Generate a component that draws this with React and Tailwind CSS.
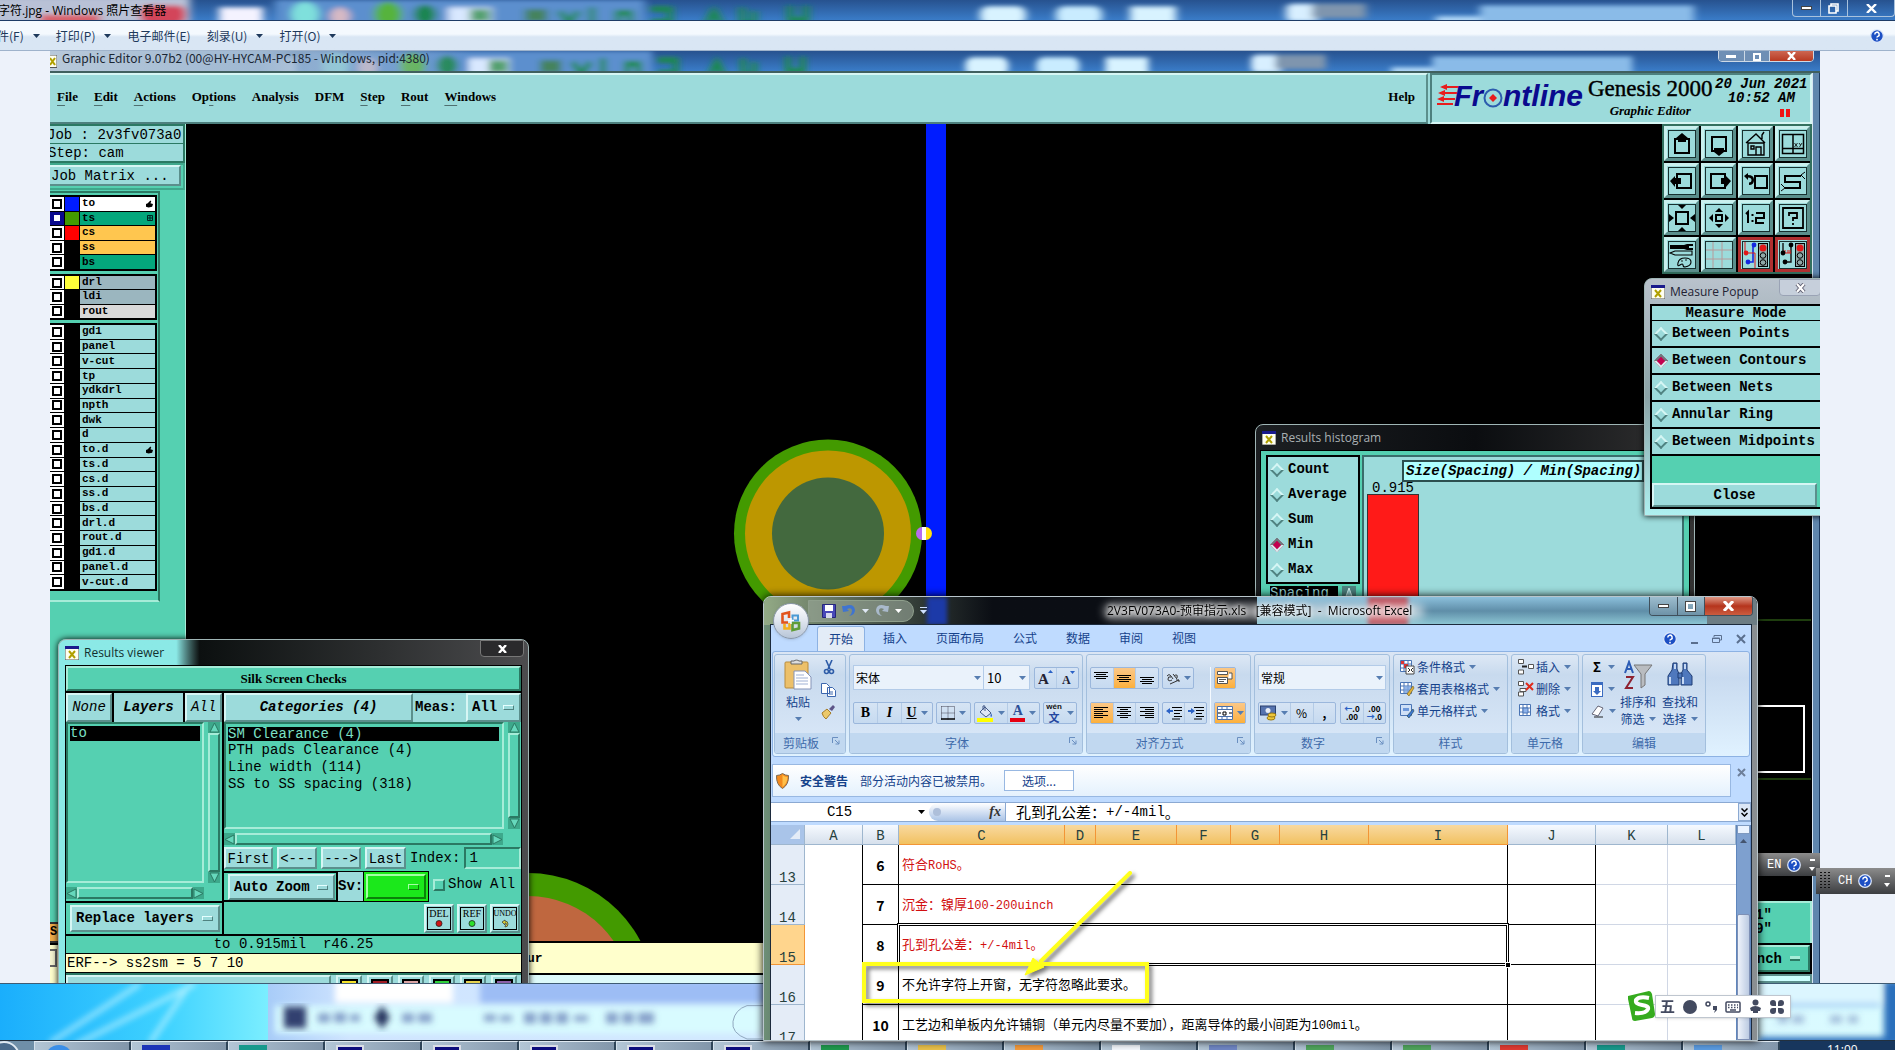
import { useState } from 'react';
import clsx from 'clsx';

const MONO = "font-['Liberation_Mono','Noto_Sans_CJK_SC',monospace]";
const SERIF = "font-['Liberation_Serif',serif]";
const UI = "font-['Open_Sans','Noto_Sans_CJK_SC',sans-serif]";
const CJK = "font-['Noto_Sans_CJK_SC',sans-serif]";

// Motif style bevels
const raised = 'border-2 border-t-[#d6f6f4] border-l-[#d6f6f4] border-b-[#5b8f8c] border-r-[#5b8f8c] bg-[#9cdbdb]';
const raisedGreen = 'border-2 border-t-[#a6ecd8] border-l-[#a6ecd8] border-b-[#2b7963] border-r-[#2b7963] bg-[#55d0b1]';
const sunkenGreen = 'border-2 border-t-[#2b7963] border-l-[#2b7963] border-b-[#a6ecd8] border-r-[#a6ecd8] bg-[#55d0b1]';

const layerGroups = [
  {
    height: 'h-[76px]',
    rows: [
      { name: 'to', color: 'bg-[#001cff]', bg: 'bg-white', mark: 'hand' },
      { name: 'ts', color: 'bg-[#439a00]', bg: 'bg-[#04a77c]', mark: 'grid', on: true },
      { name: 'cs', color: 'bg-[#ff0000]', bg: 'bg-[#ffc64f]' },
      { name: 'ss', color: 'bg-black', bg: 'bg-[#ffc64f]' },
      { name: 'bs', color: 'bg-black', bg: 'bg-[#04a77c]' },
    ],
  },
  {
    height: 'h-[46px]',
    rows: [
      { name: 'drl', color: 'bg-[#ffff3a]', bg: 'bg-[#9bb6bf]' },
      { name: 'ldi', color: 'bg-black', bg: 'bg-[#9bb6bf]' },
      { name: 'rout', color: 'bg-black', bg: 'bg-[#d9d9d9]' },
    ],
  },
  {
    height: 'h-[268px]',
    rows: ['gd1', 'panel', 'v-cut', 'tp', 'ydkdrl', 'npth', 'dwk', 'd', 'to.d', 'ts.d', 'cs.d', 'ss.d', 'bs.d', 'drl.d', 'rout.d', 'gd1.d', 'panel.d', 'v-cut.d'].map((name) => ({
      name,
      color: 'bg-black',
      bg: 'bg-[#9cdbdb]',
      mark: name === 'to.d' ? 'hand' : undefined,
    })),
  },
];

const Caret = ({ className = 'text-[#567db1]' }) => (
  <svg width="7" height="4" viewBox="0 0 7 4" className={clsx('shrink-0', className)}>
    <path d="M0 0h7L3.5 4z" fill="currentColor" />
  </svg>
);

const XIcon = () => (
  <svg width="14" height="14" viewBox="0 0 14 14" className="shrink-0">
    <rect width="14" height="14" fill="#fffff0" stroke="#555" />
    <rect width="14" height="3" fill="#1a1a8c" />
    <path d="M4 5l6 7M10 5l-6 7" stroke="#b0a000" strokeWidth="2" />
  </svg>
);

const HelpBall = ({ size = 14 }) => (
  <svg width={size} height={size} viewBox="0 0 14 14" className="shrink-0">
    <circle cx="7" cy="7" r="6.3" fill="#1c4fc4" stroke="#dfe9fa" strokeWidth="1.2" />
    <path d="M4.8 5.4a2.2 2.2 0 1 1 3.2 1.9q-1 .5-1 1.3" fill="none" stroke="#fff" strokeWidth="1.5" />
    <rect x="6.2" y="9.8" width="1.6" height="1.6" fill="#fff" />
  </svg>
);

// Icons behind the glass of the title bars
const GlassBackdrop = ({ className }) => (
  <svg className={clsx('absolute inset-0 h-full w-full', className)} viewBox="0 0 1895 22" preserveAspectRatio="none">
    <defs>
      <linearGradient id="glassFade" x1="0" x2="0" y1="0" y2="1">
        <stop offset="0" stopColor="#27528f" />
        <stop offset="1" stopColor="#3a7cc8" />
      </linearGradient>
      <filter id="glassBlur" x="-5%" y="-50%" width="110%" height="200%"><feGaussianBlur stdDeviation="4 2.5" /></filter>
    </defs>
    <rect width="1895" height="22" fill="url(#glassFade)" />
    <g filter="url(#glassBlur)">
      <rect x="-10" y="-4" width="200" height="30" fill="#b9c1d6" />
      <rect x="40" y="16" width="60" height="10" fill="#d9606a" />
      <rect x="140" y="6" width="46" height="20" rx="8" fill="#d3455a" />
      <rect x="219" y="8" width="44" height="20" fill="#f4f3ff" />
      <rect x="275" y="0" width="370" height="30" fill="#5b8fce" />
      <circle cx="305" cy="16" r="14" fill="#7fe0dc" />
      <circle cx="340" cy="18" r="10" fill="#d7b9c4" />
      <circle cx="388" cy="16" r="14" fill="#57b33c" />
      <circle cx="425" cy="16" r="11" fill="#1f8551" />
      <rect x="448" y="8" width="44" height="20" fill="#d9e8ff" />
      <rect x="470" y="10" width="20" height="14" fill="#55a070" />
      <rect x="525" y="10" width="22" height="14" fill="#44835d" />
      <path d="M560 12l9 14 9-14M592 8v20M618 26V14h12v12M650 10h20v14h-20M706 28l8-16 8 16M742 8v18h12V12M790 6v16h16V6" fill="none" stroke="#1c8a4a" strokeWidth="6" />
      <rect x="980" y="7" width="46" height="20" rx="8" fill="#d8f3ff" />
      <rect x="1056" y="7" width="46" height="20" rx="8" fill="#c9ecff" />
      <rect x="1130" y="7" width="46" height="20" fill="#d8f3ff" />
      <rect x="1286" y="4" width="34" height="20" rx="6" fill="#d8efff" />
      <rect x="1312" y="4" width="54" height="16" fill="#7f95ae" />
      <rect x="1436" y="18" width="60" height="8" fill="#b5daf8" />
      <rect x="1480" y="6" width="214" height="22" fill="#8abbe8" />
    </g>
  </svg>
);

const ViewerMenu = () => (
  <nav className={clsx('flex h-[30px] shrink-0 items-center border-b border-[#9fb3cb] bg-linear-to-b from-[#f4f9fe] from-45% to-[#d9e6f4] to-55% pr-[11px] text-xs text-[#1e395b]', CJK)}>
    <div className="-ml-[3px] flex flex-1 items-center gap-[16px]">
      {[['件(F)', true], ['打印(P)', true], ['电子邮件(E)', false], ['刻录(U)', true], ['打开(O)', true]].map(([label, arrow]) => (
        <button key={label} className="flex items-center gap-[9px] whitespace-nowrap">
          {label}
          {arrow && <Caret className="text-[#1e395b]" />}
        </button>
      ))}
    </div>
    <HelpBall />
  </nav>
);

const GenesisMenuBar = () => (
  <div className="flex h-[51px] shrink-0 bg-[#9cdbdb]">
    <div className={clsx('flex flex-1 items-center gap-[16px] border-2 border-l-0 border-t-[#d6f6f4] border-r-[#5b8f8c] border-b-[#4d807e] pl-[7px] pr-[11px] pb-[3px] text-[13px] font-bold text-black', SERIF)}>
      {['_File', '_Edit', '_Actions', 'Op_tions', 'Analysis', 'DFM', '_Step', '_Rout', '_Windows'].map((item) => {
        const [before, after] = item.includes('_') ? item.split('_') : [item, ''];
        return (
          <button key={item}>
            {before}
            {after && <span className="underline decoration-[#4f6f70] underline-offset-4">{after[0]}</span>}
            {after.slice(1)}
          </button>
        );
      })}
      <button className="ml-auto">Help</button>
    </div>
    <div className="ml-[2px] flex w-[382px] border-2 border-t-[#4d807e] border-l-[#4d807e] border-r-[#d6f6f4] border-b-[#d6f6f4] pl-1">
      <svg width="152" height="46" viewBox="0 0 152 46" className="shrink-0">
        <g stroke="#e81c1c" strokeWidth="2.2">
          <path d="M6 12h17M4 18h17M3 24h16M1 29h16" />
        </g>
        <path d="M4 12l7-3v6zM2 18l7-3v6zM1 24l7-3v6z" fill="#e81c1c" />
        <text x="18" y="31" fontSize="29" fontWeight="bold" fontStyle="italic" fill="#0a0a8e" fontFamily="Liberation Sans">Fr</text>
        <circle cx="57" cy="23" r="8.5" fill="none" stroke="#2c5cae" strokeWidth="2" />
        <path d="M57 19l4 4-4 4-4-4z" fill="#e81c1c" />
        <text x="67" y="31" fontSize="30" fontWeight="bold" fontStyle="italic" fill="#0a0a8e" fontFamily="Liberation Sans">ntline</text>
      </svg>
      <div className={clsx('flex flex-col items-center text-black', SERIF)}>
        <span className="mt-1 whitespace-nowrap text-[23px] leading-5 [-webkit-text-stroke:0.4px_black]">Genesis 2000</span>
        <span className="mt-[6px] text-[13px] font-bold italic leading-3">Graphic Editor</span>
      </div>
      <div className={clsx('flex flex-1 flex-col items-center whitespace-nowrap text-[14px] font-bold italic leading-[14px] text-black', MONO)}>
        <span className="mt-[2px]">20 Jun 2021</span>
        <span>10:52 AM</span>
        <span className="mt-[4px] mr-2 flex gap-[2px] self-end pr-3">
          <i className="h-[8px] w-[4px] bg-[#f01414]" />
          <i className="h-[8px] w-[4px] bg-[#f01414]" />
        </span>
      </div>
    </div>
  </div>
);

const LayerRow = ({ row }) => {
  const [checked, setChecked] = useState(Boolean(row.on));
  return (
    <label className="flex min-h-0 bg-black pt-px">
      <span className={clsx('flex w-[14px] items-center justify-center', row.on ? 'bg-[#0a0a8e]' : 'bg-white')}>
        <input
          type="checkbox"
          aria-label={row.name}
          checked={checked}
          onChange={() => setChecked(!checked)}
          className={clsx('size-[10px] appearance-none border-2 bg-white', row.on ? 'border-[#0a0a8e]' : 'border-black')}
        />
      </span>
      <span className={clsx('mx-px w-[14px]', row.color)} />
      <span className={clsx('flex min-h-0 flex-1 items-center justify-between overflow-hidden px-[2px] text-[11px] font-bold leading-[13px]', row.bg)}>
        {row.name}
        {row.mark === 'hand' && (
          <svg width="7" height="8" viewBox="0 0 8 8"><path d="M0 4l2-1 3-3 1 1-1 2 3 1-1 3-4 1-3-1z" /></svg>
        )}
        {row.mark === 'grid' && (
          <svg width="6" height="6" viewBox="0 0 6 6" fill="none" stroke="#022"><path d="M.5 .5h5v5h-5zM0 3h6M3 0v6" /></svg>
        )}
      </span>
    </label>
  );
};

const LayerPanel = () => (
  <aside className={clsx('flex w-[136px] shrink-0 flex-col border-r border-[#a6ecd8] bg-[#55d0b1] text-black', MONO)}>
    <div className="border-2 border-l-0 border-[#2b7963] bg-[#2b7963] text-[14px] leading-[18px]">
      <div className="h-[17px] overflow-hidden whitespace-nowrap bg-[#9cdbdb]"><span className="-ml-[3px]">Job : 2v3fv073a0</span></div>
      <div className="mt-px h-[17px] overflow-hidden whitespace-nowrap bg-[#9cdbdb]"><span className="-ml-[2px]">Step: cam</span></div>
    </div>
    <div className="border-2 border-l-0 border-[#3fa88c] pr-[2px] pb-[2px]">
      <button className={clsx('block h-[21px] w-full whitespace-nowrap border-l-0 pl-px text-left text-[14px] leading-[18px]', raised)}>Job Matrix ...</button>
    </div>
    <div className="mt-px mr-[25px] flex flex-col gap-[3px] border-2 border-l-0 border-t-[#2b7963] border-r-[#2b7963] border-b-[#a6ecd8] pt-[2px] pr-px pb-[9px]">
      {layerGroups.map((group) => (
        <div key={group.height} className={clsx('grid auto-rows-fr border-2 border-l-0 border-t border-black bg-black', group.height)}>
          {group.rows.map((row) => <LayerRow key={row.name} row={row} />)}
        </div>
      ))}
    </div>
    <div className="mt-auto h-[21px] w-4 overflow-hidden border-y-2 border-[#333] bg-[#f0ad4a] text-xs font-bold leading-4">Se</div>
    <div className="h-[40px] w-4 border-t-2 border-black bg-[#ffffcc] pt-1">
      <div className="h-[18px] w-[7px] border-2 border-l-0 border-[#666] bg-[#f4f4d0]" />
    </div>
  </aside>
);

const sq = (x, y, w) => <rect x={x} y={y} width={w} height={w} fill="none" stroke="#000" strokeWidth="2" />;

const trafficLight = (
  <>
    <rect x="16.5" y="2.5" width="9" height="23" fill="#8fa9a8" stroke="#000" />
    <circle cx="21" cy="7" r="3.5" fill="#e01818" />
    <circle cx="21" cy="14.5" r="2.8" fill="none" stroke="#000" />
    <circle cx="21" cy="21.5" r="2.8" fill="none" stroke="#000" />
  </>
);

const toolIcons = [
  { name: 'Pan up', art: <>{sq(7, 9, 14)}<path d="M14 3l6 5h-2v4h-8V8H8z" /></> },
  { name: 'Pan down', art: <>{sq(7, 7, 14)}<path d="M14 26l-5-4v-4h10v4z" /></> },
  { name: 'Home', art: <path d="M4 13l10-9 9 9M6 13v12h16V13zM9 16h3v3H9zM14 25v-8h5v8M20 9V5l2-3" fill="none" stroke="#000" strokeWidth="1.4" /> },
  { name: 'Zoom window', art: <><path d="M3.500 4.500h21v19h-21zM14 4v20M4 18.500h20" fill="none" stroke="#000" strokeWidth="1.5" /><path d="M15.500 13l3 4M18.500 13l-3 4M20 13l1.500 2M23 13l-2.500 4" fill="none" stroke="#000" strokeWidth=".8" /></> },
  { name: 'Pan left', art: <>{sq(9, 7, 14)}<path d="M2 14l5-5v2h6v6H7v3z" /></> },
  { name: 'Pan right', art: <>{sq(6, 7, 14)}<path d="M26 14l-5-5v2h-5v6h5v3z" /></> },
  { name: 'Previous view', art: <>{sq(13, 9, 12)}<path d="M2 9l4-3v2q6 0 6 5t-5 5v-2.500q2.500 0 2.500-2.500T6 10.500V13z" /></> },
  { name: 'Serpentine', art: <><path d="M22 9H6v6h15v6H6" fill="none" stroke="#000" strokeWidth="2" /><path d="M26 5l-4 3 4 4M2 17l4 4-4 3" fill="none" stroke="#000" /></> },
  { name: 'Zoom in', art: <>{sq(8, 8, 12)}<path d="M10 1h8l-4 4zM10 27h8l-4-4zM1 10v8l5-4zM27 10v8l-5-4z" /></> },
  { name: 'Zoom out', art: <>{sq(11, 11, 6)}<path d="M10 8h8l-4-4zM10 20h8l-4 4zM8 10v8l-4-4zM20 10v8l4-4z" /></> },
  { name: 'Scale', art: <path d="M4 10l2-2v11M10.500 10v2M10.500 16v2M14 9h8v5h-8v5h8" fill="none" stroke="#000" strokeWidth="2" /> },
  { name: 'Query', art: <path d="M4 4h20v20H4zM10 12V9h8v5h-4v3M14 19v2" fill="none" stroke="#000" strokeWidth="1.8" /> },
  { name: 'Tools', art: <><path d="M2 4h14l3-1h6v2h-4v2h4v2h-6l-3-1H2z" /><path d="M2 12l5-2h17v4H7z" fill="none" stroke="#000" strokeWidth="1.1" /><path d="M10 22q1-5 7-5t6 4-6 5q-2 0-2-2t-3 0-2-2z" fill="none" stroke="#000" strokeWidth="1.1" /><circle cx="14" cy="20" r=".8" /><circle cx="18" cy="19" r=".8" /></> },
  { name: 'Grid', art: <path d="M8 1v26M17 1v26M1 9h26M1 18h26" stroke="#b79a9a" /> },
  { name: 'Net colors', red: true, art: <><path d="M11 4v17H6" fill="none" stroke="#1428e0" strokeWidth="1.6" /><path d="M4 12h9M3 1v11M13 12v15" fill="none" stroke="#e01818" /><circle cx="12" cy="4" r="2.4" fill="#1428e0" /><circle cx="6" cy="21" r="2.4" fill="#1428e0" /><circle cx="4" cy="12" r="2.4" fill="#e01818" />{trafficLight}</> },
  { name: 'Net select', red: true, art: <><path d="M12 4v17H6M4 12V2" fill="none" stroke="#111" strokeWidth="1.4" /><path d="M5 12h7M6 9v3M9 9v3M11 9v3" stroke="#e01818" /><circle cx="12" cy="4" r="2.4" /><circle cx="6" cy="21" r="2.4" /><circle cx="4" cy="12" r="2.4" />{trafficLight}</> },
];

const RightPanel = () => (
  <aside className={clsx('flex w-[150px] shrink-0 flex-col bg-black font-bold text-black', MONO)}>
    <div className="grid grid-cols-4 gap-[2px] border-2 border-[#33705f] bg-black">
      {toolIcons.map((icon) => (
        <button
          key={icon.name}
          aria-label={icon.name}
          className={clsx('flex h-[35px] items-center justify-center border-[3px]', icon.red ? 'border-[#b03030] bg-[#9cdbdb]' : 'border-t-[#c9f0ee] border-l-[#c9f0ee] border-b-[#5b8f8c] border-r-[#5b8f8c] bg-[#9cdbdb]')}
        >
          <svg width="28" height="28" viewBox="0 0 28 28">
            <rect x=".5" y=".5" width="27" height="27" fill="none" stroke="#17302f" />
            {icon.art}
          </svg>
        </button>
      ))}
    </div>
    <svg className="min-h-0 w-full flex-1" fill="none">
      <path d="M0 346h149M0 505h149" stroke="#3c7a1c" strokeWidth="1" />
      <path d="M0 432h142v66H0" stroke="#fff" strokeWidth="2" />
    </svg>
    <div className="h-[42px] border-t-2 border-r-2 border-[#a6ecd8] bg-[#55d0b1] pt-[5px] pr-[38px] text-right text-sm leading-[14px]">1&quot;<br />9&quot;</div>
    <div className="h-[31px] border-2 border-black">
      <button className={clsx('flex h-full w-full items-center justify-end gap-2 pr-2 text-sm', raisedGreen)}>
        nch <i className="h-[5px] w-[10px] border-b-2 border-[#2b7963] bg-[#a6ecd8]" />
      </button>
    </div>
    <div className="h-[9px] border-2 border-[#5b8f8c] bg-[#cff]" />
  </aside>
);

const BoardCanvas = () => (
  <div className="flex min-w-0 flex-1 flex-col overflow-hidden bg-black">
    <svg className="min-h-0 w-full flex-1">
      <rect x="740" y="0" width="20" height="818" fill="#001cff" />
      <circle cx="642" cy="409.5" r="94" fill="#439a00" />
      <circle cx="642" cy="409.5" r="83" fill="#bd9700" />
      <circle cx="642" cy="409.5" r="56" fill="#43693e" />
      <path d="M736 403a6 6.5 0 0 0 0 13z" fill="#b76cf0" />
      <path d="M740 403a6 6.5 0 0 1 0 13z" fill="#ffe010" />
      <rect x="736" y="403" width="4" height="13" fill="#fff" />
      <circle cx="342" cy="876" r="127" fill="#439a00" />
      <circle cx="342" cy="876" r="104" fill="#bf673f" />
    </svg>
    <div className={clsx('mt-[2px] h-[30px] shrink-0 bg-[#ffffcc] pl-[341px] text-[13px] font-bold leading-[32px]', MONO)}>ur</div>
    <div className="h-[10px] shrink-0 border-t-2 border-black bg-[#ddfafa]" />
  </div>
);

const CanvasWindow = ({ title, className, titleClass, glass, children }) => (
  <section className={clsx('absolute flex flex-col overflow-hidden rounded-t-lg border border-[#9fb5b5] px-[6px] shadow-[0_0_6px_#000]', glass, className)}>
    <header className={clsx('flex h-[25px] shrink-0 items-center gap-[5px] text-xs', UI, titleClass)}>
      <XIcon />
      {title}
    </header>
    {children}
  </section>
);

const RadioRow = ({ group, label, checked, onChange, className }) => (
  <label className={clsx('flex items-center gap-[6px] whitespace-nowrap text-[14px] font-bold', className)}>
    <input
      type="radio"
      name={group}
      checked={checked}
      onChange={onChange}
      className={clsx(
        'size-[10px] shrink-0 rotate-45 appearance-none border-2',
        checked ? 'border-t-[#6b7c7c] border-l-[#6b7c7c] border-r-[#d8eeee] border-b-[#d8eeee] bg-[#c3004f]' : 'border-t-[#d6f6f4] border-l-[#d6f6f4] border-r-[#4f8280] border-b-[#4f8280] bg-[#9cdbdb]'
      )}
    />
    {label}
  </label>
);

const HistogramWindow = () => {
  const [mode, setMode] = useState('Min');
  return (
    <CanvasWindow title="Results histogram" className="top-[373px] left-[1205px] h-[180px] w-[440px]" glass="bg-linear-to-r from-[#1c1f22] via-[#0b0d10] to-[#333]" titleClass="text-[#a9b0b3]">
      <div className={clsx('-mx-[2px] flex min-h-0 flex-1 gap-[2px] border border-black bg-[#55d0b1] p-[5px] pt-1 pb-0 text-black', MONO)}>
        <div className="w-[94px] shrink-0">
          <div className="border-2 border-black bg-[#9cdbdb] pl-[4px]">
            {['Count', 'Average', 'Sum', 'Min', 'Max'].map((m) => (
              <RadioRow key={m} group="stat" label={m} checked={mode === m} onChange={() => setMode(m)} className="h-[25px]" />
            ))}
          </div>
          <div className="mt-[2px] flex">
            <div className="ml-1 w-[68px] bg-black text-[14px] leading-[14px] text-[#9cdbdb]">Spacing</div>
            <svg width="14" height="16" viewBox="0 0 14 16" className="ml-1 bg-[#4d807e]"><path d="M7 2l4 11H3z" fill="#8fc9c9" stroke="#d6f6f4" /></svg>
          </div>
        </div>
        <div className="min-w-0 flex-1 border-2 border-[#3a6d6b] bg-[#9cdbdb]">
          <div className="mt-[3px] ml-[38px] w-[242px] border-2 border-[#2c4f4f] bg-[#afffff] pl-[2px] text-[14px] font-bold italic leading-[18px] whitespace-nowrap">Size(Spacing) / Min(Spacing)</div>
          <div className="ml-[3px] w-[52px] text-center text-[14px] leading-3">0.915</div>
          <div className="ml-[3px] h-[110px] w-[52px] border border-[#333] bg-[#ff1a18]" />
        </div>
      </div>
    </CanvasWindow>
  );
};

const MeasureWindow = () => {
  const [mode, setMode] = useState('Between Contours');
  return (
    <CanvasWindow title="Measure Popup" className="top-[227px] -right-[8px] h-[238px] w-[184px] bg-[#a9c3c6]" glass="bg-linear-to-b from-[#b9c2cc] via-[#8ba3a7] to-[#aef0f0]" titleClass="text-[#223]">
      <button aria-label="Close window" className="absolute top-0 right-[6px] flex h-[17px] w-[42px] items-center justify-center rounded-b border border-[#9aa3b5] bg-[#c6cfdb]">
        <svg width="11" height="10" viewBox="0 0 11 10"><path d="M2 1l7 8M9 1L2 9" stroke="#667" strokeWidth="4" /><path d="M2 1l7 8M9 1L2 9" stroke="#fff" strokeWidth="2" /></svg>
      </button>
      <div className={clsx('-mx-px flex min-h-0 flex-1 flex-col border-2 border-black bg-[#55d0b1] text-[14px] text-black', MONO)}>
        <div className="border-b border-black bg-[#9cdbdb] text-center text-[14px] font-bold leading-[14px]">Measure Mode</div>
        {['Between Points', 'Between Contours', 'Between Nets', 'Annular Ring', 'Between Midpoints'].map((m) => (
          <RadioRow key={m} group="measure" label={m} checked={mode === m} onChange={() => setMode(m)} className="h-[27px] border-b-2 border-black bg-[#9cdbdb] pl-[4px]" />
        ))}
        <button className={clsx('mr-[3px] mt-auto h-[24px] font-bold leading-5', raised)}>Close</button>
      </div>
      <div className="h-[6px] shrink-0" />
    </CanvasWindow>
  );
};

const OptionMenu = ({ label, options, className }) => (
  <span className={clsx('relative inline-flex items-center', raised, className)}>
    <select aria-label={label} className="w-full appearance-none bg-transparent pl-1 font-bold outline-none">
      {options.map((o) => <option key={o}>{o}</option>)}
    </select>
    <i className="pointer-events-none absolute right-[5px] h-[5px] w-[11px] border border-t-[#e4ffff] border-l-[#e4ffff] border-r-[#4f8280] border-b-[#4f8280]" />
  </span>
);

const ScrollBar = ({ horizontal, className }) => (
  <div className={clsx('flex shrink-0 items-center bg-[#3da88b]', horizontal ? 'h-[12px]' : 'w-[12px] flex-col', className)}>
    <svg width="11" height="11" viewBox="0 0 11 11" className="shrink-0"><path d={horizontal ? 'M1 5.5L10 1v9z' : 'M5.5 1L10 10H1z'} fill="#66d8bc" stroke="#2b7963" /></svg>
    <div className={clsx('flex-1', horizontal ? 'h-[12px]' : 'w-[12px]', raisedGreen)} />
    <svg width="11" height="11" viewBox="0 0 11 11" className="shrink-0"><path d={horizontal ? 'M10 5.5L1 1v9z' : 'M5.5 10L10 1H1z'} fill="#66d8bc" stroke="#2b7963" /></svg>
  </div>
);

const ResultsWindow = () => (
  <CanvasWindow
    title="Results viewer"
    className="top-[588px] left-[8px] h-[352px] w-[471px]"
    glass="bg-linear-to-r from-[#8be9e6] from-25% via-[#0c1010] via-30% to-[#4c4c4e]"
    titleClass="text-[#12302f]"
  >
    <button aria-label="Close" className="absolute top-0 right-1 flex h-[17px] w-[44px] items-center justify-center rounded-b border border-[#777] bg-[#2a2a2c]">
      <svg width="9" height="8" viewBox="0 0 9 8" stroke="#fff" strokeWidth="2.4"><path d="M1 0l7 8M8 0L1 8" /></svg>
    </button>
    <div className={clsx('flex min-h-0 flex-1 flex-col border border-black bg-[#55d0b1] text-[14px] font-bold text-black', MONO)}>
      <h2 className={clsx('h-[25px] shrink-0 text-center text-[13px] leading-[22px]', SERIF, raisedGreen)}>Silk Screen Checks</h2>
      <div className="flex h-[245px] shrink-0 border-y-2 border-black">
        {/* layers */}
        <div className="flex w-[158px] shrink-0 flex-col border-r-2 border-black">
          <div className="flex h-[29px] bg-[#9cdbdb] italic">
            <button className={clsx('w-[46px] font-normal', raised)}>None</button>
            <span className="flex-1 border-x-2 border-black text-center leading-7">Layers</span>
            <button className={clsx('w-[37px] font-normal', raised)}>All</button>
          </div>
          <div className="flex min-h-0 flex-1 justify-between">
            <div className={clsx('w-[138px] p-[2px]', sunkenGreen)}>
              <div className="h-[15px] bg-black font-normal leading-[14px] text-[#7ce0c6]">to</div>
            </div>
            <ScrollBar className="mr-[2px]" />
          </div>
          <ScrollBar horizontal className="mt-1 mb-[2px] mr-[18px]" />
          <div className="h-[33px] border-t-2 border-black p-[2px] pl-1">
            <OptionMenu label="Replace mode" options={['Replace layers']} className="h-[27px] w-full" />
          </div>
        </div>
        {/* categories */}
        <div className="flex min-w-0 flex-1 flex-col">
          <div className="flex h-[29px] items-stretch bg-[#9cdbdb]">
            <button className={clsx('w-[189px] italic', raised)}>Categories (4)</button>
            <label className="flex flex-1 items-center whitespace-nowrap pl-[2px]">Meas:</label>
            <OptionMenu label="Meas" options={['All']} className="w-[55px]" />
          </div>
          <div className="flex h-[107px] justify-between">
            <ul className={clsx('w-[280px] pt-[3px] pl-[2px] pr-[3px] leading-[17px] font-normal', sunkenGreen)}>
              <li className="h-[14px] bg-black leading-[14px] text-[#7ce0c6]">SM Clearance (4)</li>
              <li className="mt-px">PTH pads Clearance (4)</li>
              <li>Line width (114)</li>
              <li>SS to SS spacing (318)</li>
            </ul>
            <ScrollBar className="mr-px" />
          </div>
          <ScrollBar horizontal className="mt-1 mr-[18px]" />
          <div className="mt-[2px] flex h-[22px] items-stretch gap-1 font-normal">
            <button className={clsx('w-[49px] whitespace-nowrap', raised)}>First</button>
            <button className={clsx('w-[40px]', raised)}>&lt;---</button>
            <button className={clsx('w-[40px]', raised)}>---&gt;</button>
            <button className={clsx('w-[41px]', raised)}>Last</button>
            <label htmlFor="idx" className="flex items-center">Index:</label>
            <input id="idx" defaultValue="1" className={clsx('min-w-0 flex-1 pl-[3px] outline-none', sunkenGreen)} />
          </div>
          <div className="mt-[2px] flex h-[31px]">
            <div className="w-[114px] border-y-2 border-r-2 border-black p-px pl-[4px]">
              <OptionMenu label="Zoom" options={['Auto Zoom']} className="h-[26px] w-full" />
            </div>
            <span className="border-y border-black bg-[#9cdbdb] leading-7">Sv:</span>
            <button aria-label="Severity" className="flex flex-1 items-center justify-end border border-black bg-[#1be81b] p-[2px]">
              <span className="flex h-full w-full items-center justify-end border-2 border-t-[#a4ffa4] border-l-[#a4ffa4] border-b-[#0a820a] border-r-[#0a820a] pr-[5px]">
                <i className="h-[6px] w-[11px] border border-b-[#0a820a] border-r-[#0a820a] border-t-[#a4ffa4] border-l-[#a4ffa4]" />
              </span>
            </button>
            <label className="flex w-[92px] items-center gap-[3px] whitespace-nowrap pl-1 pb-1 font-normal">
              <input type="checkbox" className={clsx('size-[12px] appearance-none', raisedGreen)} />
              Show All
            </label>
          </div>
          <div className="flex flex-1 items-center justify-end gap-[3px] pr-px">
            {[['DEL', '#d01414'], ['REF', '#2be02b'], ['UNDO', '#d9cf3a']].map(([name, color]) => (
              <button key={name} className={clsx('flex h-[29px] w-[30px] items-center justify-center', raised)}>
                <span className="flex h-[23px] w-[24px] flex-col items-center border border-black">
                  <span className={clsx('font-normal leading-[11px]', SERIF, name === 'UNDO' ? 'text-[8px]' : 'text-[10px]')}>{name}</span>
                  <svg width="8" height="9" viewBox="0 0 8 9">
                    {name === 'UNDO'
                      ? <path d="M1 3l3-2v1q3 0 3 3t-3 3v-1q2-1 1-3H4v2z" fill={color} stroke="#333" strokeWidth=".7" />
                      : <circle cx="4" cy="4.5" r="3" fill={color} stroke="#222" strokeWidth=".8" />}
                  </svg>
                </span>
              </button>
            ))}
          </div>
        </div>
      </div>
      <div className="h-[17px] shrink-0 whitespace-pre text-center font-normal leading-[16px]">to 0.915mil  r46.25</div>
      <div className="h-[20px] shrink-0 border-y border-black bg-[#ffffcc] pl-px font-normal leading-[18px]">ERF--&gt; ss2sm = 5 7 10</div>
      <div className="flex flex-1 gap-[5px] border-t-2 border-[#2b7963] bg-[#9cdbdb] pr-1">
        <div className={clsx('flex-1', raised)} />
        {['bg-[#f4e22a]', 'bg-[#a01c24]', 'bg-[#d9a3a3]', 'bg-[#2ed03a]', 'bg-[#e6d350]', 'bg-[#8c5fa8]'].map((c) => (
          <span key={c} className={clsx('w-[26px] p-[2px]', raised)}><i className={clsx('block h-3 border-2 border-black', c)} /></span>
        ))}
      </div>
    </div>
  </CanvasWindow>
);

/* ---------- Excel ---------- */

const RibbonGroup = ({ title, className, launcher, children }) => (
  <section className={clsx('flex shrink-0 flex-col overflow-hidden rounded-[3px] border border-[#a3bfdd] bg-linear-to-b from-[#dde8f5] via-[#c8daee] via-20% to-[#dbe9f9]', className)}>
    <div className="min-h-0 flex-1">{children}</div>
    <h3 className={clsx('relative h-[20px] bg-[#c1d8f0] text-center text-xs leading-5 text-[#3e6aaa]', launcher && 'pr-[18px]')}>
      {title}
      {launcher && (
        <svg width="8" height="8" viewBox="0 0 8 8" className="absolute top-[4px] right-[5px]" fill="none" stroke="#6a8fc0"><path d="M.5 6V.5H6M3 3l4 4M7 3.5V7H3.5" /></svg>
      )}
    </h3>
  </section>
);

const BtnBox = ({ children, className }) => (
  <div className={clsx('flex h-[22px] items-stretch divide-x divide-[#b4cbe6] rounded-[2px] border border-[#9bb7dc] bg-linear-to-b from-[#d6e4f4] to-[#c6daf0]', className)}>{children}</div>
);

const Cmd = ({ label, hot, children, className }) => (
  <button aria-label={label} className={clsx('flex flex-1 items-center justify-center gap-1', hot && 'bg-linear-to-b from-[#fbc785] to-[#fcb03a]', className)}>{children}</button>
);

// horizontal text lines, [x, width] for each line
const Lines = ({ rows, y = 2 }) => (
  <svg width="15" height="14" viewBox="0 0 15 14" shapeRendering="crispEdges">
    {rows.map(([x, w], i) => <rect key={i} x={x} y={y + i * 2} width={w} height="1" fill="#000" />)}
  </svg>
);

const GridIcon = ({ children }) => (
  <svg width="16" height="16" viewBox="0 0 16 16" className="shrink-0">
    <path d="M1.5 1.5h11v11h-11zM1.5 5h11M1.5 9h11M5 1.5v11M9 1.5v11" fill="#fff" stroke="#4a74b4" />
    {children}
  </svg>
);

const StyleCmd = ({ icon, label }) => (
  <button className="flex h-[22px] items-center gap-[2px] whitespace-nowrap">{icon}{label}<Caret className="ml-[2px] text-[#567db1]" /></button>
);

const Ribbon = () => (
  <div className="mx-px flex h-[106px] shrink-0 gap-[3px] rounded-[3px] border border-[#8db2e3] bg-linear-to-b from-[#dbe6f4] via-[#c9dbf0] via-25% to-[#e0f2ff] px-px pt-[2px] pb-[2px] text-xs text-[#15428b]">
    <RibbonGroup title="剪贴板" className="w-[72px]" launcher>
      <div className="flex h-full">
        <button className="flex w-[46px] flex-col items-center pt-1 leading-4">
          <svg width="28" height="31" viewBox="0 0 28 31">
            <rect x="1" y="3" width="23" height="26" rx="1" fill="#ecc06a" stroke="#b98c3c" />
            <path d="M7 5h11V2h-3a3 2 0 0 0-5 0H7z" fill="#ddd" stroke="#666" />
            <path d="M10 12h11l6 6v12H10z" fill="#fff" stroke="#8594b8" />
            <path d="M12 16h8M12 19h12M12 22h12M12 25h12" stroke="#9fb1d4" />
          </svg>
          <span className="mt-[4px]">粘贴</span>
          <Caret className="mt-[7px] text-[#567db1]" />
        </button>
        <div className="flex flex-col items-center gap-[8px] pt-[5px]">
          <button aria-label="剪切"><svg width="12" height="15" viewBox="0 0 12 15" fill="none" stroke="#2e5ca8" strokeWidth="1.6"><path d="M3 0l4 9M9 0L5 9" /><circle cx="3.5" cy="11.5" r="2" /><circle cx="8.5" cy="11.5" r="2" /></svg></button>
          <button aria-label="复制"><svg width="15" height="14" viewBox="0 0 15 14" fill="#fff" stroke="#3b66ae"><path d="M.5 .5h5l3 3v7h-8zM6.5 4.500h5l3 3v6h-8zM8 9h4M8 11h4" /></svg></button>
          <button aria-label="格式刷"><svg width="15" height="14" viewBox="0 0 15 14"><path d="M1 8l5-4 4 4-5 6q-3-2-4-6z" fill="#ecc96a" stroke="#a67c28" /><path d="M8 4l4-4 2 2-3 4z" fill="#5c5488" /></svg></button>
        </div>
      </div>
    </RibbonGroup>
    <RibbonGroup title="字体" className="w-[234px]" launcher>
      <div className="flex items-center pt-[10px] pl-[3px]">
        <label className="flex h-[25px] w-[131px] items-center justify-between border border-[#b3cbe8] bg-[#eaf2fb] px-[2px] text-black">
          <select aria-label="字体" className="flex-1 appearance-none bg-transparent outline-none"><option>宋体</option></select><Caret />
        </label>
        <label className="mr-1 flex h-[25px] w-[46px] items-center justify-between border border-l-0 border-[#b3cbe8] bg-[#eaf2fb] px-[3px] text-black">
          <select aria-label="字号" className="w-6 appearance-none bg-transparent text-[13px] outline-none"><option>10</option></select><Caret />
        </label>
        <BtnBox className="w-[45px]">
          <Cmd label="增大字号"><svg width="15" height="17" viewBox="0 0 15 17"><text x="0" y="15" fontSize="15" fontWeight="bold" fontFamily="Liberation Serif" fill="#223">A</text><path d="M10 4l2.500-3L15 4z" fill="#2b62c6" /></svg></Cmd>
          <Cmd label="减小字号"><svg width="14" height="17" viewBox="0 0 14 17"><text x="1" y="15" fontSize="12" fontWeight="bold" fontFamily="Liberation Serif" fill="#223">A</text><path d="M9 2h5l-2.500 3z" fill="#2b62c6" /></svg></Cmd>
        </BtnBox>
      </div>
      <div className={clsx('flex gap-[3px] pt-[12px] pl-[3px] text-sm font-bold text-black', SERIF)}>
        <BtnBox className="w-[80px]">
          <Cmd label="加粗">B</Cmd>
          <Cmd label="倾斜" className="italic">I</Cmd>
          <Cmd label="下划线" className="flex-[1.3]"><span className="underline">U</span><Caret /></Cmd>
        </BtnBox>
        <BtnBox className="w-[35px]">
          <Cmd label="边框"><svg width="14" height="14" viewBox="0 0 14 14"><path d="M.5 .5h13v13M.5 .5v13M7 .5v13M.5 7h13" fill="none" stroke="#445" strokeDasharray="1 1" /><path d="M0 13h14" stroke="#000" strokeWidth="1.5" /></svg><Caret /></Cmd>
        </BtnBox>
        <BtnBox className="w-[66px]">
          <Cmd label="填充颜色"><svg width="17" height="17" viewBox="0 0 17 17"><path d="M3 7l5-5 6 6-5 4z" fill="#dfe7f5" stroke="#445a88" /><path d="M6 5V1q2-1 2 1v4" fill="none" stroke="#445a88" /><path d="M14 8q2 3 0 4-1-1 0-4" fill="#3566c0" /><rect y="13" width="16" height="4" fill="#ffff00" /></svg><Caret /></Cmd>
          <Cmd label="字体颜色"><span className="flex flex-col items-center leading-3 text-[#2d4f97]">A<i className="mt-px h-[4px] w-[15px] bg-[#e60012]" /></span><Caret /></Cmd>
        </BtnBox>
        <BtnBox className="w-[34px]">
          <Cmd label="拼音">
            <svg width="17" height="20" viewBox="0 0 17 20" textAnchor="middle">
              <text x="8" y="6" fontSize="8" fontFamily="Liberation Sans" fill="#111">wén</text>
              <text x="8" y="19" fontSize="11" fontFamily="Noto Sans CJK SC" fill="#2447a0">文</text>
            </svg>
            <Caret />
          </Cmd>
        </BtnBox>
      </div>
    </RibbonGroup>
    <RibbonGroup title="对齐方式" className="w-[165px]" launcher>
      <div className="flex justify-between pr-[4px] pl-[3px]">
        <div className="flex flex-col gap-[13px] pt-[12px]">
          <div className="flex gap-[3px]">
            <BtnBox className="w-[69px]">
              <Cmd label="顶端对齐"><Lines rows={[[0, 14], [2, 10], [0, 14], [2, 10]]} y={1} /></Cmd>
              <Cmd label="垂直居中" hot><Lines rows={[[0, 14], [2, 10], [0, 14], [2, 10]]} y={4} /></Cmd>
              <Cmd label="底端对齐"><Lines rows={[[0, 14], [2, 10], [0, 14], [2, 10]]} y={6} /></Cmd>
            </BtnBox>
            <BtnBox className="w-[32px]">
              <Cmd label="方向"><svg width="15" height="14" viewBox="0 0 15 14" fill="none" stroke="#333"><path d="M2 5q2-3 4 0l2 3M6 6q-3-1-3 2t4 1M8 3l4 5M9 5q4-3 3 2M5 13l9-4M11 9h3v2" /></svg><Caret /></Cmd>
            </BtnBox>
          </div>
          <div className="flex gap-[3px]">
            <BtnBox className="w-[69px]">
              <Cmd label="左对齐" hot><Lines rows={[[0, 14], [0, 9], [0, 14], [0, 9], [0, 14], [0, 9]]} y={1} /></Cmd>
              <Cmd label="居中"><Lines rows={[[0, 14], [3, 8], [0, 14], [3, 8], [0, 14], [3, 8]]} y={1} /></Cmd>
              <Cmd label="右对齐"><Lines rows={[[0, 14], [5, 9], [0, 14], [5, 9], [0, 14], [5, 9]]} y={1} /></Cmd>
            </BtnBox>
            <BtnBox className="w-[45px]">
              <Cmd label="减少缩进"><svg width="16" height="14" viewBox="0 0 16 14"><path d="M6 1.5h10M8 4.500h8M8 7.500h6M8 10.5h8M6 13h8" stroke="#000" /><path d="M0 5l4-3v6zM4 4h3v2H4z" fill="#2b62c6" /></svg></Cmd>
              <Cmd label="增加缩进"><svg width="16" height="14" viewBox="0 0 16 14"><path d="M6 1.5h10M8 4.500h8M8 7.500h6M8 10.5h8M6 13h8" stroke="#000" /><path d="M7 5L3 2v6zM0 4h3v2H0z" fill="#2b62c6" /></svg></Cmd>
            </BtnBox>
          </div>
        </div>
        <div className="mt-[12px] h-[57px] w-px bg-[#f5faff]" />
        <div className="flex flex-col gap-[13px] pt-[12px]">
          <BtnBox className="w-[22px]"><Cmd label="自动换行" hot><svg width="16" height="16" viewBox="0 0 16 16" fill="#fff" stroke="#555"><path d="M.5 1.5h10v3H.5zM.5 7.500h10v6H.5zM2 9.5h7M2 11.500h5M12 3h3v6h-4" /></svg></Cmd></BtnBox>
          <BtnBox className="w-[32px]"><Cmd label="合并后居中" hot><svg width="16" height="14" viewBox="0 0 16 14"><path d="M.5 .5h15v13H.5zM.5 3.500h15M.5 10.500h15M5 0v3M10 0v3M5 11v3M10 11v3" fill="#fff" stroke="#4c72ad" /><path d="M1 7h3M12 7h3M6 6h3v3H6z" fill="none" stroke="#000" /></svg><Caret /></Cmd></BtnBox>
        </div>
      </div>
    </RibbonGroup>
    <RibbonGroup title="数字" className="w-[136px]" launcher>
      <div className="px-[3px] pt-[10px] text-black">
        <label className="flex h-[25px] items-center justify-between border border-[#b3cbe8] bg-[#eaf2fb] px-[2px]">
          <select aria-label="数字格式" className="flex-1 appearance-none bg-transparent outline-none"><option>常规</option></select><Caret />
        </label>
        <div className="flex gap-1 pt-[12px] font-bold">
          <BtnBox className="w-[79px]">
            <Cmd label="货币" className="flex-[1.4]"><svg width="17" height="16" viewBox="0 0 17 16"><rect x=".5" y="1" width="15" height="9" fill="#5673ae" stroke="#2b4170" /><circle cx="8" cy="5.5" r="2.5" fill="#e8edf7" /><ellipse cx="11" cy="13" rx="4" ry="2" fill="#edc63c" stroke="#9b7a10" /><ellipse cx="12" cy="10" rx="4" ry="2" fill="#edc63c" stroke="#9b7a10" /></svg><Caret /></Cmd>
            <Cmd label="百分比" className="font-normal">%</Cmd>
            <Cmd label="千位分隔">,</Cmd>
          </BtnBox>
          <BtnBox className="w-[46px] text-[8px] leading-[8px]">
            <Cmd label="增加小数位"><span><b className="text-[#2b62c6]">←</b>.0<br />.00</span></Cmd>
            <Cmd label="减少小数位"><span>.00<br /><b className="text-[#2b62c6]">→</b>.0</span></Cmd>
          </BtnBox>
        </div>
      </div>
    </RibbonGroup>
    <RibbonGroup title="样式" className="w-[115px]">
      <div className="flex flex-col items-start pt-px pl-[5px]">
        <StyleCmd label="条件格式" icon={<GridIcon><path d="M2 2h3v3H2zM5 5h4v4H5z" fill="#d33" /><path d="M7 7h8v8H7z" fill="#fff" stroke="#444" /><path d="M9 9l2 2-2 2M14 9l-2 2 2 2" stroke="#333" fill="none" /></GridIcon>} />
        <StyleCmd label="套用表格格式" icon={<GridIcon><path d="M5 5h7v7H5z" fill="#79a3df" opacity=".8" /><path d="M14 5l-6 8 2 2 5-8z" fill="#e0b33c" stroke="#7a5c14" strokeWidth=".6" /></GridIcon>} />
        <StyleCmd label="单元格样式" icon={<GridIcon><path d="M2 2h10v10H2z" fill="#cfe0f7" /><path d="M4 5h6v3H4z" fill="#6d98da" /><path d="M14 6l-6 7 2 2 5-7z" fill="#3c77d4" stroke="#244" strokeWidth=".6" /></GridIcon>} />
      </div>
    </RibbonGroup>
    <RibbonGroup title="单元格" className="w-[68px]">
      <div className="flex flex-col items-start pt-px pl-[6px]">
        <StyleCmd label="插入" icon={<svg width="16" height="16" viewBox="0 0 16 16" fill="#fff" stroke="#555"><path d="M.5 .5h5v4h-5zM.5 11h5v4h-5zM10.5 5.500h5v4h-5z" /><path d="M4 7.500h5" stroke="#222" strokeWidth="2" /></svg>} />
        <StyleCmd label="删除" icon={<svg width="16" height="16" viewBox="0 0 16 16" fill="#fff" stroke="#555"><path d="M.5 .5h5v4h-5zM.5 11h5v4h-5zM2 7.500h6v3H2z" /><path d="M8 2l7 7M15 2L8 9" stroke="#e02a1c" strokeWidth="2" /></svg>} />
        <StyleCmd label="格式" icon={<GridIcon><path d="M5 5h5v5H5z" fill="#8fb4ec" stroke="#4a74b4" /></GridIcon>} />
      </div>
    </RibbonGroup>
    <RibbonGroup title="编辑" className="w-[124px]">
      <div className="flex pl-2">
        <div className="flex flex-col items-start pt-px text-black">
          {['Σ', 'fill', 'clear'].map((k) => (
            <button key={k} aria-label={k} className="flex h-[22px] items-center gap-[5px] font-bold">
              {k === 'Σ' && <span className="w-[12px] text-[13px]">Σ</span>}
              {k === 'fill' && <svg width="12" height="15" viewBox="0 0 12 15"><rect x=".5" y=".5" width="11" height="14" fill="#fff" stroke="#3a6bc0" /><path d="M0 1h12v2H0z" fill="#3a6bc0" /><path d="M4 5h4v4h2l-4 4-4-4h2z" fill="#3a6bc0" /></svg>}
              {k === 'clear' && <svg width="13" height="13" viewBox="0 0 13 13"><path d="M1 9l6-8 5 2-5 8z" fill="#fff" stroke="#667" /><path d="M3 12h9" stroke="#222" /></svg>}
              <Caret />
            </button>
          ))}
        </div>
        <div className="ml-[3px] flex gap-1 leading-[17px] text-[#15428b]">
          <button className="flex w-[38px] flex-col items-center pt-[5px]">
            <svg width="29" height="30" viewBox="0 0 29 30">
              <path d="M1 13L5 2l4 11M2.5 9h5" fill="none" stroke="#2c5cb5" strokeWidth="2" />
              <path d="M2 17h7L2 28h7" fill="none" stroke="#8e2230" strokeWidth="2" />
              <path d="M10 5h18l-7 9v11l-4 3V14z" fill="#b9bcc0" stroke="#777" />
            </svg>
            <span className="mt-[3px] whitespace-nowrap">排序和</span>
            <span className="flex items-center gap-1 whitespace-nowrap">筛选<Caret /></span>
          </button>
          <button className="flex w-[38px] flex-col items-center pt-[5px]">
            <svg width="28" height="30" viewBox="0 0 28 30" fill="#4f78bd" stroke="#1f3c74">
              <path d="M7 3h4v6l2 5v11H2V16l4-6zM17 3h4v7l5 6v9H15V14l2-4z" /><path d="M12 13h4v5h-4z" />
              <path d="M4 17v7M17 17v7M9 4v5M19 4v5" stroke="#c5d8f4" strokeWidth="2" />
            </svg>
            <span className="mt-[3px] whitespace-nowrap">查找和</span>
            <span className="flex items-center gap-1 whitespace-nowrap">选择<Caret /></span>
          </button>
        </div>
      </div>
    </RibbonGroup>
  </div>
);

const columns = [
  ['A', 'w-[58px]'], ['B', 'w-[36px]'], ['C', 'w-[166px]', true], ['D', 'w-[31px]', true], ['E', 'w-[81px]', true], ['F', 'w-[54px]', true],
  ['G', 'w-[49px]', true], ['H', 'w-[89px]', true], ['I', 'w-[139px]', true], ['J', 'w-[88px]'], ['K', 'w-[72px]'], ['L', ''],
];

const sheetRows = [
  { row: 13, no: '6', text: '符合RoHS。', red: true },
  { row: 14, no: '7', text: '沉金：镍厚100-200uinch', red: true },
  { row: 15, no: '8', text: '孔到孔公差：+/-4mil。', red: true, selected: true },
  { row: 16, no: '9', text: '不允许字符上开窗，无字符忽略此要求。' },
  { row: 17, no: '10', text: '工艺边和单板内允许铺铜（单元内尽量不要加），距离导体的最小间距为100mil。' },
];

// latin runs go one size down so that they take half of a CJK cell
const SheetText = ({ text }) =>
  text.split(/([\x20-\x7e]+)/).map((part, i) =>
    i % 2 ? <span key={i} className="font-['Liberation_Mono',monospace] text-xs">{part}</span> : part
  );

const Sheet = () => (
  <div className="flex min-h-0 flex-1 overflow-hidden">
    <div className="relative min-w-0 flex-1 overflow-hidden bg-white">
      <table className="w-full table-fixed border-separate border-spacing-0 text-black">
        <thead>
          <tr className={clsx('h-[20px] text-[14px] text-[#27413e]', MONO)}>
            <th className="w-[34px] border-r border-b border-[#9eb6ce] bg-[#a9c4e9] p-0">
              <svg width="10" height="11" viewBox="0 0 10 11" className="mr-1 ml-auto"><path d="M10 0v10H0z" fill="#e4ecf7" /></svg>
            </th>
            {columns.map(([name, width, hot]) => (
              <th key={name} className={clsx('border-r border-b p-0 pt-[3px] leading-4 font-normal', width, hot ? 'border-[#f29536] bg-linear-to-b from-[#f9d99f] to-[#f1c15f]' : 'border-[#9eb6ce] bg-linear-to-b from-[#f6faff] to-[#d6e0ec]')}>{name}</th>
            ))}
          </tr>
        </thead>
        <tbody>
          {sheetRows.map((r) => (
            <tr key={r.row} className="h-[40px]">
              <th className={clsx('border-r border-b p-0 align-bottom text-[14px] leading-3 font-normal text-[#27413e]', MONO, r.selected ? 'border-[#f29536] bg-[#ffd58d]' : 'border-[#9eb6ce] bg-[#e4ecf7]')}>{r.row}</th>
              <td className="border-r border-black p-0" />
              <td className={clsx('border-r border-b border-black p-0 text-center text-[14px] leading-5 font-bold', CJK)}>{r.no}</td>
              <td colSpan={7} className={clsx('relative border-r border-b border-black p-0 pb-px pl-[3px] text-[13px] leading-5 whitespace-nowrap', CJK, r.red && 'text-[#d20f0f]')}>
                <SheetText text={r.text} />
                {r.selected && (
                  <>
                    <span className="absolute -inset-[2px] z-10 border border-black shadow-[inset_0_0_0_1px_white,inset_0_0_0_2px_black]" />
                    <span className="absolute -right-[4px] -bottom-[4px] z-10 size-[6px] border border-white bg-black" />
                  </>
                )}
              </td>
              <td className="border-r border-b border-black p-0" />
              <td className="border-r border-b border-[#d0d7e5] p-0" />
              <td className="border-b border-[#d0d7e5] p-0" />
            </tr>
          ))}
        </tbody>
      </table>
      {/* markup drawn over the sheet */}
      <svg className="absolute top-0 left-0 z-20" width="420" height="190" viewBox="0 0 420 190" fill="none">
        <g className="drop-shadow-[3px_3px_2px_#0008]">
          <rect x="93" y="139" width="283" height="37" stroke="#ffff1c" strokeWidth="4" />
          <path d="M359 48L270 136" stroke="#ffff1c" strokeWidth="4" strokeLinecap="round" />
          <path d="M254 150l8-17 11 9z" fill="#ffff1c" stroke="#ffff1c" />
        </g>
      </svg>
    </div>
    <div className="flex w-[15px] flex-col border-x border-[#5f86bd] bg-[#7ea0cf]">
      <div className="h-[9px] border border-[#7e99bf] bg-[#eaf3ff]" />
      <Caret className="mx-auto mt-[5px] rotate-180 text-[#44546f]" />
      <div className="mt-[71px] flex-1 rounded-t-[2px] border border-[#7e90b5] bg-linear-to-r from-[#eef3fb] to-[#bccbe2]" />
    </div>
  </div>
);

const OfficeButton = () => (
  <button aria-label="Office" className="absolute top-[6px] left-[9px] z-10 size-[36px] rounded-full border border-[#8a97a8] bg-linear-to-b from-white via-[#dfe5ee] to-[#b8c6d8] p-[6px] shadow">
    <svg width="22" height="22" viewBox="0 0 22 22" fill="none" strokeWidth="2.6">
      <path d="M9 8V2.500L2.500 4v8.500H8" stroke="#e2541c" />
      <path d="M12.5 5.500H18v5h-5.500z" stroke="#4a9ad4" strokeWidth="2" />
      <path d="M9.500 13v5.500H4.500V14" stroke="#f3b01c" />
      <path d="M12.500 13H19v5.500l-6.500 1.500z" stroke="#5f9c36" />
      <path d="M8 10.500h6M11 8v6" stroke="#fff" strokeWidth="1.4" />
    </svg>
  </button>
);

const ExcelWindow = () => (
  <section className={clsx('absolute top-[596px] left-[763px] flex h-[445px] w-[995px] flex-col overflow-hidden rounded-t-lg border border-[#b9c6cc] bg-linear-to-r from-[#6e8f77] via-[#0c1116] via-12% to-[#8a8f92] px-[6px] shadow-[0_0_8px_#000]', CJK)}>
    <div className="absolute inset-x-0 top-0 h-[28px] bg-linear-to-r from-[#93aa86] from-0% via-[#0b0e14] via-23% to-[#0b0e14] to-40%" />
    <div className="absolute top-0 right-[50px] h-[28px] w-[450px] bg-linear-to-b from-[#8cc0dc] via-[#5f8ea8] to-[#8fc9d6]" />
    <div className="absolute top-0 right-0 h-[28px] w-[50px] bg-[#6d7d84]" />
    <div className="absolute top-0 left-[163px] h-[28px] w-[20px] bg-[#1c3aa8] blur-[2px]" />
    <div className="absolute top-0 left-[604px] h-[28px] w-[40px] bg-[#b8434f] blur-[2px]" />
    <div className="absolute top-[7px] left-[340px] h-[15px] w-[320px] rounded-full bg-white/60 blur-[5px]" />
    <OfficeButton />
    <header className="relative flex h-[27px] shrink-0 items-center">
      <div className="ml-[38px] flex h-[22px] w-[106px] items-center gap-[6px] rounded-r-full border border-[#8f9f8c] bg-[#9aa79a]/60 pl-[13px]">
        <button aria-label="保存"><svg width="14" height="14" viewBox="0 0 14 14"><path d="M.5 .5h13v13H.5z" fill="#4848b8" stroke="#26267a" /><path d="M3 1h8v6H3z" fill="#fff" /><path d="M4 9h6v5H4z" fill="#d6d9ee" /></svg></button>
        <button aria-label="撤消"><svg width="14" height="13" viewBox="0 0 14 13"><path d="M0 2l1 6 6-1-2-2q5-2 5 2 0 3-3 5 6-1 6-6-1-7-10-4z" fill="#3f74d0" /></svg></button>
        <Caret className="text-[#dfe8f5]" />
        <button aria-label="恢复"><svg width="14" height="13" viewBox="0 0 14 13"><path d="M14 2l-1 6-6-1 2-2Q4 3 4 7q0 3 3 5-6-1-6-6 1-7 10-4z" fill="#a9b9cb" /></svg></button>
        <Caret className="text-white" />
      </div>
      <span className="ml-[6px] flex flex-col items-center gap-[2px]"><i className="h-px w-[7px] bg-[#cfe0ff]" /><Caret className="text-[#cfe0ff]" /></span>
      <span className={clsx('ml-[180px] whitespace-pre text-xs text-black [text-shadow:0_0_4px_#fff,0_0_6px_#fff]', UI)}>2V3FV073A0-预审指示.xls   [兼容模式]  -  Microsoft Excel</span>
      <div className="absolute top-0 right-[-2px] flex h-[19px] w-[104px] overflow-hidden rounded-b-[4px] border border-t-0 border-[#40505c]">
        <button aria-label="最小化" className="flex flex-1 items-center justify-center bg-linear-to-b from-[#9dbdce] to-[#6e93a8]"><i className="h-1 w-[11px] border border-[#444] bg-white" /></button>
        <button aria-label="还原" className="flex flex-1 items-center justify-center border-x border-[#40505c] bg-linear-to-b from-[#9dbdce] to-[#6e93a8]"><i className="size-[9px] border-2 border-white outline outline-[#444]" /></button>
        <button aria-label="关闭" className="flex w-[47px] items-center justify-center bg-linear-to-b from-[#dd9583] via-[#b5341c] to-[#cc5c40]"><svg width="11" height="10" viewBox="0 0 11 10" stroke="#fff" strokeWidth="3"><path d="M1 0l9 10M10 0L1 10" /></svg></button>
      </div>
    </header>
    <div className="relative -mr-px flex min-h-0 flex-1 flex-col border border-b-0 border-[#1c2a3c] bg-[#bfdbff]">
      <div className="flex h-[26px] shrink-0 items-end pl-[46px] text-xs text-[#15428b]">
        {['开始', '插入', '页面布局', '公式', '数据', '审阅', '视图'].map((tab, i) => (
          <button key={tab} className={clsx('mr-[7px] h-[25px] px-[11px] pb-px whitespace-nowrap', i === 0 && 'rounded-t-[3px] border border-b-0 border-[#8db2e3] bg-[#e3ecf7]')}>{tab}</button>
        ))}
        <div className="mr-[5px] mb-[5px] ml-auto flex items-center gap-[14px] text-[#5a6f8e]">
          <HelpBall />
          <i className="mt-2 h-[2px] w-[7px] bg-current" />
          <svg width="10" height="8" viewBox="0 0 10 8" fill="none" stroke="currentColor"><path d="M2 2V.5h7.500V5H8M.5 3h7v4.500h-7zM.5 3.500h7" /></svg>
          <svg width="10" height="10" viewBox="0 0 10 10" stroke="currentColor" strokeWidth="2"><path d="M1 1l8 8M9 1L1 9" /></svg>
        </div>
      </div>
      <Ribbon />
      <div className="flex shrink-0 pt-[7px] pb-[5px] pl-px">
        <div className="flex h-[33px] flex-1 items-center border border-[#98b8e2] bg-linear-to-b from-white to-[#e4f1fd] pl-[3px] text-xs text-[#15428b]">
          <svg width="13" height="16" viewBox="0 0 13 16"><path d="M6.5 .5q3 2 6 2 .5 9-6 13-6.500-4-6-13 3 0 6-2z" fill="#f48a1c" stroke="#7d6a52" /><path d="M6.5 2v12q5-4 5-10-3 0-5-2z" fill="#ffc04a" /></svg>
          <b className="ml-[11px]">安全警告</b>
          <span className="ml-3">部分活动内容已被禁用。</span>
          <button className="ml-3 h-[21px] w-[70px] border border-[#98b8e2] bg-white">选项...</button>
        </div>
        <button aria-label="关闭消息栏" className="flex w-[20px] justify-center pt-1"><svg width="9" height="9" viewBox="0 0 9 9" stroke="#6d7f9a" strokeWidth="2"><path d="M1 1l7 7M8 1L1 8" /></svg></button>
      </div>
      <div className="flex h-[20px] shrink-0 items-stretch border-y border-[#8ba9d2] bg-white text-black">
        <label className="flex w-[158px] items-center pr-1"><input aria-label="名称框" defaultValue="C15" className={clsx('w-full min-w-0 bg-transparent pr-[10px] text-center text-[14px] outline-none', MONO)} /><Caret className="text-black" /></label>
        <div className="flex w-[77px] items-center justify-between rounded-l-full border-r border-[#8ba9d2] bg-linear-to-b from-white to-[#aac3e6] pr-1 pl-1">
          <i className="size-[8px] rounded-full bg-[#aebfda]" />
          <span className="font-['Liberation_Serif',serif] text-sm font-bold italic text-[#333]">fx</span>
        </div>
        <div className={clsx('flex flex-1 items-center pl-[10px] text-[15px] leading-4', CJK)}>
          孔到孔公差：<span className={clsx('text-[14px]', MONO)}>+/-4mil</span>。
        </div>
        <button aria-label="展开编辑栏" className="flex w-[13px] items-center justify-center border border-[#8ba9d2] bg-[#dbe7f6]"><svg width="7" height="9" viewBox="0 0 7 9" fill="none" stroke="#000" strokeWidth="1.5"><path d="M.5 .5l3 3 3-3M.5 5l3 3 3-3" /></svg></button>
      </div>
      <div className="h-[3px] shrink-0" />
      <Sheet />
    </div>
  </section>
);

const LangBar = ({ text, grip, className }) => (
  <div className={clsx("absolute flex items-center bg-linear-to-b from-[#8c8c8c] to-[#3c3e41] font-['Liberation_Mono',monospace] text-xs text-white", className)}>
    {grip && <svg width="10" height="18" className="mr-2"><path d="M1 0v18M5 0v18M9 0v18" stroke="#111" strokeWidth="2" strokeDasharray="1 2" /></svg>}
    {text}
    <span className="ml-[6px]"><HelpBall /></span>
    <span className="mr-[5px] ml-auto flex flex-col items-center gap-[6px]"><i className="h-[2px] w-[5px] bg-white" /><svg width="6" height="4"><path d="M0 0h6L3 4z" fill="#fff" /></svg></span>
  </div>
);

const SogouBar = () => (
  <div className="absolute top-[995px] left-[1655px] flex h-[23px] w-[136px] items-center justify-between border border-[#bfc6cf] bg-white pr-[6px] pl-[4px] text-[#434a60] shadow-sm">
    <svg width="30" height="30" viewBox="0 0 30 30" className="absolute -top-[5px] -left-[29px]">
      <path d="M1 5L22 0q2 0 3 3l3 20q0 3-3 4L8 30q-3 0-3-3L1 8z" fill="#35ab1e" />
      <path d="M22 7q-10-2-13 2-1 4 6 5t6 4q-2 5-13 4" fill="none" stroke="#fff" strokeWidth="4" />
    </svg>
    <span className={clsx('text-[15px] font-bold', CJK)}>五</span>
    <i className="size-[14px] rounded-full bg-current" />
    <svg width="12" height="14" viewBox="0 0 12 14"><circle cx="3" cy="4" r="2" fill="none" stroke="currentColor" strokeWidth="1.5" /><path d="M8 6h4v4l-3 3 1-3H8z" fill="currentColor" /></svg>
    <svg width="16" height="12" viewBox="0 0 16 12" fill="none" stroke="currentColor" strokeWidth="1.5"><rect x="1" y="1" width="14" height="10" rx="1" /><path d="M3 4h10M3 6.5h10" strokeDasharray="1.5 1.5" /><path d="M5 9h6" /></svg>
    <svg width="13" height="15" viewBox="0 0 13 15" fill="currentColor"><circle cx="6.5" cy="3.5" r="3" /><path d="M1 9q5-4 11 0l-1 3H9v2H4v-2H2z" /></svg>
    <svg width="14" height="14" viewBox="0 0 14 14" fill="currentColor"><path d="M0 3a3 3 0 1 1 6 0v3H3a3 3 0 0 1-3-3zM8 3a3 3 0 1 1 3 3H8zM0 11a3 3 0 0 1 3-3h3v3a3 3 0 1 1-6 0zM8 8h3a3 3 0 1 1-3 3z" /></svg>
  </div>
);

const Wallpaper = () => (
  <div className="relative h-[57px] shrink-0 overflow-hidden border-t border-[#3f5c74] bg-[#dff0ff]">
    <svg className="absolute inset-0 h-full w-full" viewBox="0 0 1895 57" preserveAspectRatio="none">
      <defs>
        <linearGradient id="sky"><stop offset="0" stopColor="#1aaefc" /><stop offset=".6" stopColor="#3fd2ff" /><stop offset="1" stopColor="#7ff0ff" /></linearGradient>
        <linearGradient id="edge"><stop offset="0" stopColor="#a8ccf8" /><stop offset=".05" stopColor="#cfe4ff" /><stop offset=".8" stopColor="#d9f4ff" /><stop offset="1" stopColor="#dafcff" /></linearGradient>
        <filter id="soft"><feGaussianBlur stdDeviation="3" /></filter>
      </defs>
      <rect width="275" height="57" fill="url(#sky)" />
      <g filter="url(#soft)" stroke="#c8f6ff" strokeWidth="4" opacity=".8"><path d="M50 60L140 0M75 62L195 0M150 60L190 0" /></g>
      <rect x="268" width="1627" height="57" fill="url(#edge)" />
      <g filter="url(#soft)">
        <rect x="480" y="-4" width="290" height="24" fill="#9dbdf5" />
        <rect x="335" y="-4" width="118" height="23" fill="#fff" />
        <rect x="275" y="22" width="488" height="28" fill="#d8fbff" />
        <rect x="1750" y="-4" width="130" height="26" fill="#dcf6ff" />
        <rect x="1750" y="20" width="130" height="3" fill="#8abdf0" />
        <rect x="1884" y="-4" width="20" height="66" fill="#2a6fbc" />
        <rect x="1758" y="54" width="137" height="10" fill="#2a6fbc" />
      </g>
      <g filter="url(#soft)" fill="#4f63a5">
        <rect x="284" y="23" width="22" height="22" fill="#333f70" />
        <path d="M382 22l8 12-8 12-8-12z" fill="#26345f" />
        <g opacity=".6">
          <path d="M318 30h12v9h-12zM334 29h12v10h-12zM350 31h10v7h-10zM402 30h12v9h-12zM418 30h14v9h-14z" />
          <path d="M484 31h12v7h-12zM500 32h12v6h-12zM524 29h12v11h-12zM540 29h12v11h-12zM556 29h12v11h-12zM574 32h14v6h-14zM606 29h12v11h-12zM622 29h12v11h-12zM638 29h16v11h-16z" />
        </g>
        <path d="M1778 32h10v8h-10zM1792 32h12v8h-12zM1830 32h12v8h-12zM1848 32h10v8h-10z" opacity=".4" />
      </g>
      <path d="M763 22h-16q-12 4-14 16t14 18h16" fill="none" stroke="#8fa6bd" />
    </svg>
  </div>
);

const taskColors = ['bg-[#3b8fe8]', 'bg-[#1c34b8]', 'bg-[#17998c]', 'bg-[#0c0c7c]', 'bg-[#0c0c7c]', 'bg-[#0c0c7c]', 'bg-[#0c0c7c]', 'bg-[#0c0c7c]', 'bg-[#1f9a4e]', 'bg-[#e8c04a]', 'bg-[#f29a3c]', 'bg-[#f3f7fc]', 'bg-[#6f86c4]', 'bg-[#4fa45c]', 'bg-[#4fa45c]', 'bg-[#e03a32]', 'bg-[#17998c]', 'bg-[#5a9be0]'];

const TaskBar = () => (
  <footer className="flex h-[10px] shrink-0 overflow-hidden border-t border-[#22303e] bg-[#16365a]">
    <div className="flex w-[34px] items-start bg-[#6f8fa8]"><i className="-ml-3 block size-8 rounded-full border-2 border-[#dfe9f2] bg-[#4a6b8c]" /></div>
    {taskColors.map((c, i) => (
      <button key={i} aria-label={`window ${i + 1}`} className="flex h-10 min-w-0 flex-1 border-t border-r-2 border-l border-t-[#e0eaf2] border-r-[#2e4458] border-l-[#d4e1ec] bg-linear-to-r from-[#b3c6d6] to-[#8296aa] pl-[10px]">
        <i className={clsx('mt-[3px] block size-7', c, i === 0 && 'rounded-full', i > 2 && i < 8 && 'border-2 border-[#d9dde6]')} />
      </button>
    ))}
    <div className="w-[115px] bg-[#17365d] pt-px pl-[47px] font-['Open_Sans',sans-serif] text-xs leading-4 text-white">11:00</div>
  </footer>
);

export default function App() {
  return (
    <div className="relative flex h-screen flex-col overflow-hidden bg-[#edf2fa]">
      <header className="relative flex h-[21px] shrink-0 items-center justify-between overflow-hidden border-b border-[#1d3b66]">
        <GlassBackdrop />
        <h1 className={clsx('relative -ml-[2px] pt-px text-xs whitespace-nowrap text-black', UI)}>字符.jpg - Windows 照片查看器</h1>
        <div className="relative flex h-[17px] w-[103px] self-start rounded-b-[4px] border border-t-0 border-[#a9c2dd] text-white">
          <button aria-label="最小化" className="flex flex-1 items-center justify-center border-r border-[#a9c2dd]"><i className="h-1 w-[11px] border border-[#444] bg-white" /></button>
          <button aria-label="还原" className="flex flex-1 items-center justify-center border-r border-[#a9c2dd]"><svg width="11" height="11" viewBox="0 0 11 11" fill="none" stroke="#fff" strokeWidth="1.6"><path d="M3 3V1h7v7H8M1 3h7v7H1z" /></svg></button>
          <button aria-label="关闭" className="flex w-[46px] items-center justify-center"><svg width="11" height="9" viewBox="0 0 11 9" stroke="#fff" strokeWidth="2.4"><path d="M1 0l9 9M10 0L1 9" /></svg></button>
        </div>
      </header>
      <ViewerMenu />
      <main className="min-h-0 flex-1 pr-[75px] pl-[50px]">
        <div className="relative flex h-full flex-col overflow-hidden">
          <div className="relative flex h-[22px] shrink-0 items-center overflow-hidden border-b-2 border-[#40605f]">
            <GlassBackdrop />
            <div className="absolute left-0 h-full w-[420px] bg-linear-to-r from-[#b8c9da] via-[#9fb8d2] to-transparent" />
            <svg width="7" height="13" viewBox="0 0 7 13" className="relative"><rect x="-7" width="14" height="12.5" fill="#fffff0" stroke="#555" /><path d="M0 3l5 7M5 3l-5 7" stroke="#b0a000" strokeWidth="2" /></svg>
            <span className={clsx('relative ml-[5px] -mt-[6px] text-xs whitespace-nowrap text-[#1a2633]', CJK)}>Graphic Editor 9.07b2 (00@HY-HYCAM-PC185 - Windows, pid:4380)</span>
            <div className="absolute -top-2 right-[6px] flex h-[19px] w-[96px] overflow-hidden rounded-b-[4px] border border-[#cdd9e6]">
              <button aria-label="Minimize" className="flex flex-1 items-center justify-center bg-[#6f8fb5] pt-2"><i className="h-[3px] w-[10px] bg-white" /></button>
              <button aria-label="Maximize" className="flex flex-1 items-center justify-center border-x border-[#cdd9e6] bg-[#6f8fb5] pt-2"><i className="size-[8px] border-2 border-white" /></button>
              <button aria-label="Close editor" className="flex w-[43px] items-center justify-center bg-linear-to-b from-[#d98370] to-[#b8381f] pt-[6px]"><svg width="9" height="8" viewBox="0 0 9 8" stroke="#fff" strokeWidth="2.4"><path d="M1 0l7 8M8 0L1 8" /></svg></button>
            </div>
          </div>
          <div className="flex min-h-0 flex-1 border-r border-[#1c3a60]">
            <div className="flex min-w-0 flex-1 flex-col">
              <GenesisMenuBar />
              <div className="flex min-h-0 flex-1">
                <LayerPanel />
                <BoardCanvas />
                <RightPanel />
              </div>
            </div>
            <div className="w-[7px] shrink-0 border-l border-[#d6e4f2] bg-[#5f86ad]" />
          </div>
          <HistogramWindow />
          <MeasureWindow />
          <ResultsWindow />
        </div>
      </main>
      <Wallpaper />
      <TaskBar />
      <LangBar text="EN" className="top-[853px] left-[1751px] h-[23px] w-[69px] pl-4" />
      <LangBar text="CH" grip className="top-[868px] left-[1816px] h-[26px] w-[79px] pl-1" />
      <ExcelWindow />
      <SogouBar />
    </div>
  );
}
